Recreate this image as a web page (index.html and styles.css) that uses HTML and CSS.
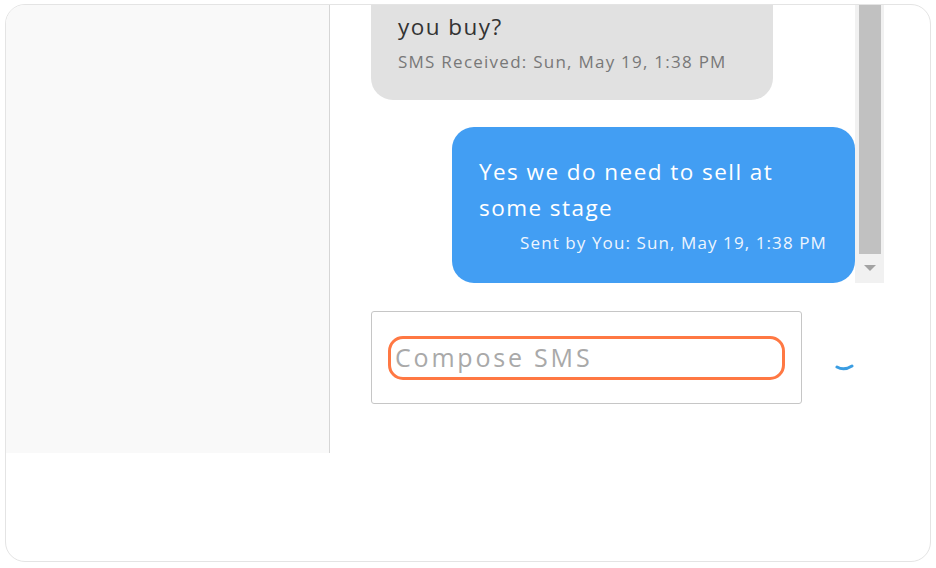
FILE: index.html
```html
<!DOCTYPE html>
<html>
<head>
<meta charset="utf-8">
<link rel="stylesheet" href="styles.css">
</head>
<body>
<div class="frame">
  <div class="main">
    <aside class="sidebar"></aside>
    <section class="chat">
      <div class="thread">
        <div class="messages">
          <div class="bubble received">
            <div class="text">you buy?</div>
            <div class="meta">SMS Received: Sun, May 19, 1:38 PM</div>
          </div>
          <div class="bubble sent">
            <div class="text">Yes we do need to sell at<br>some stage</div>
            <div class="meta">Sent by You: Sun, May 19, 1:38 PM</div>
          </div>
        </div>
        <div class="scrollbar">
          <div class="thumb"></div>
          <div class="arrow"></div>
        </div>
      </div>
      <div class="composer">
        <div class="compose-box">
          <div class="compose-field">Compose SMS</div>
        </div>
        <svg class="spinner" width="20" height="10" viewBox="0 0 20 10"><path d="M2 4 Q9 8 17 3" fill="none" stroke="#3a9de2" stroke-width="3" stroke-linecap="round"/></svg>
      </div>
    </section>
  </div>
</div>
</body>
</html>
```
FILE: styles.css
```css
html, body {
  margin: 0;
  padding: 0;
  background: #ffffff;
}
body {
  font-family: "Open Sans", "Liberation Sans", sans-serif;
}
.frame {
  margin: 4px 5px 0 5px;
  height: 556px;
  border: 1px solid #e4e4e4;
  border-radius: 20px;
  overflow: hidden;
  background: #fff;
}
.main {
  display: flex;
  height: 448px;
}
.sidebar {
  width: 323px;
  background: #f9f9f9;
  border-right: 1px solid #d6d6d6;
}
.chat {
  flex: 1;
  padding-left: 41px;
  display: flex;
  flex-direction: column;
}
.thread {
  display: flex;
  height: 278px;
}
.messages {
  width: 484px;
  display: flex;
  flex-direction: column;
  justify-content: flex-end;
  align-items: stretch;
  overflow: hidden;
  gap: 27px;
}
.bubble {
  border-radius: 22px;
  box-sizing: border-box;
}
.received {
  width: 402px;
  background: #e1e1e1;
  color: #333;
  padding: 40px 10px 26px 27px;
  border-top-left-radius: 0;
  border-top-right-radius: 0;
}
.sent {
  width: 403px;
  align-self: flex-end;
  background: #429ef3;
  color: #fff;
  padding: 27px 28px 28px 27px;
}
.text {
  font-size: 22.5px;
  line-height: 36px;
  font-weight: 500;
  letter-spacing: 1.45px;
  white-space: nowrap;
}
.meta {
  font-size: 17px;
  line-height: 24px;
  margin-top: 5px;
  white-space: nowrap;
}
.received .meta {
  color: #787878;
  letter-spacing: 1.25px;
}
.sent .meta {
  text-align: right;
  color: #eef5fe;
  font-weight: 500;
  letter-spacing: 1.1px;
}
.scrollbar {
  width: 29px;
  background: #f1f1f1;
  display: flex;
  flex-direction: column;
  align-items: center;
}
.thumb {
  width: 22px;
  height: 249px;
  background: #c1c1c1;
}
.arrow {
  margin-top: 11px;
  width: 0;
  height: 0;
  border-left: 6px solid transparent;
  border-right: 6px solid transparent;
  border-top: 6px solid #a3a3a3;
}
.composer {
  display: flex;
  align-items: flex-start;
  margin-top: 28px;
}
.compose-box {
  width: 431px;
  height: 93px;
  box-sizing: border-box;
  border: 1px solid #c6c6c6;
  border-radius: 3px;
  padding: 24px 16px 0 16px;
}
.compose-field {
  height: 44px;
  box-sizing: border-box;
  border: 3px solid #ff7843;
  border-radius: 15px;
  padding-left: 4px;
  font-size: 25px;
  line-height: 37px;
  letter-spacing: 2.8px;
  color: #a9a9a9;
}
.spinner {
  margin-left: 33px;
  margin-top: 52px;
}
```
